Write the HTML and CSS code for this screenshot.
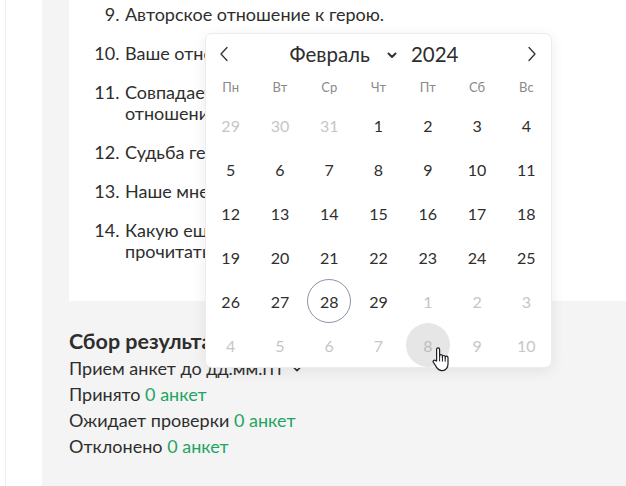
FILE: index.html
```html
<!DOCTYPE html>
<html lang="ru">
<head>
  <meta charset="UTF-8">
  <meta name="viewport" content="width=device-width, initial-scale=1.0">
  <title>Анкета — сбор результатов</title>
  <link rel="stylesheet" href="styles.css">
</head>
<body>
  <div class="layout">
    <aside class="rail"></aside>

    <main class="main">
      <section class="card">
        <ol class="questions" start="9">
          <li>Авторское отношение к герою.</li>
          <li>Ваше отношение к герою.</li>
          <li>Совпадает ли ваше отношение к герою с отношением автора?</li>
          <li>Судьба героя.</li>
          <li>Наше мнение о книге.</li>
          <li>Какую еще книгу этого автора вы хотели бы прочитать?</li>
        </ol>
      </section>

      <section class="results">
        <h3>Сбор результатов</h3>
        <div class="deadline">
          Прием анкет до дд.мм.ггг
          <svg class="caret" width="10" height="6" viewBox="0 0 10 6"><path d="M1.5 1.2 5 4.6 8.5 1.2" fill="none" stroke="#333" stroke-width="1.6" stroke-linecap="round" stroke-linejoin="round"/></svg>
        </div>
        <p>Принято <span class="ok">0 анкет</span></p>
        <p>Ожидает проверки <span class="ok">0 анкет</span></p>
        <p>Отклонено <span class="ok">0 анкет</span></p>
      </section>

      <!-- date picker dropdown -->
      <div class="datepicker">
        <div class="dp-head">
          <button class="dp-nav" type="button">
            <svg width="10" height="16" viewBox="0 0 10 16"><path d="M8 1.5 2 8l6 6.5" fill="none" stroke="#333" stroke-width="1.3" stroke-linecap="round" stroke-linejoin="round"/></svg>
          </button>
          <div class="dp-title">
            <span>Февраль</span>
            <svg class="dp-caret" width="10" height="7" viewBox="0 0 10 7"><path d="M1.5 1.5 5 5l3.5-3.5" fill="none" stroke="#333" stroke-width="2" stroke-linecap="round" stroke-linejoin="round"/></svg>
            <span>2024</span>
          </div>
          <button class="dp-nav" type="button">
            <svg width="10" height="16" viewBox="0 0 10 16"><path d="M2 1.5 8 8l-6 6.5" fill="none" stroke="#333" stroke-width="1.3" stroke-linecap="round" stroke-linejoin="round"/></svg>
          </button>
        </div>

        <div class="dp-grid dp-week">
          <span>Пн</span><span>Вт</span><span>Ср</span><span>Чт</span><span>Пт</span><span>Сб</span><span>Вс</span>
        </div>

        <div class="dp-grid dp-days">
          <span class="out"><i>29</i></span><span class="out"><i>30</i></span><span class="out"><i>31</i></span>
          <span><i>1</i></span><span><i>2</i></span><span><i>3</i></span><span><i>4</i></span>
          <span><i>5</i></span><span><i>6</i></span><span><i>7</i></span><span><i>8</i></span>
          <span><i>9</i></span><span><i>10</i></span><span><i>11</i></span>
          <span><i>12</i></span><span><i>13</i></span><span><i>14</i></span><span><i>15</i></span>
          <span><i>16</i></span><span><i>17</i></span><span><i>18</i></span>
          <span><i>19</i></span><span><i>20</i></span><span><i>21</i></span><span><i>22</i></span>
          <span><i>23</i></span><span><i>24</i></span><span><i>25</i></span>
          <span><i>26</i></span><span><i>27</i></span><span class="today"><i>28</i></span><span><i>29</i></span>
          <span class="out"><i>1</i></span><span class="out"><i>2</i></span><span class="out"><i>3</i></span>
          <span class="out"><i>4</i></span><span class="out"><i>5</i></span><span class="out"><i>6</i></span><span class="out"><i>7</i></span>
          <span class="out hover"><i>8</i></span><span class="out"><i>9</i></span><span class="out"><i>10</i></span>
        </div>
      </div>

      <!-- pointer over the hovered day -->
      <svg class="pointer" width="18" height="25" viewBox="0 0 18 25">
        <path d="M4.6 14V2.3a1.5 1.5 0 0 1 3 0V10V9a1.4 1.4 0 0 1 2.8 0v1.6V9.9a1.4 1.4 0 0 1 2.8 0v1.2v-.6a1.4 1.4 0 0 1 2.8 0V17c0 3.6-2.2 6.6-5.6 6.6H9.6c-2.4 0-3.8-1.4-5-3.2L1.4 15.3a1.3 1.3 0 0 1 2.1-1.6Z" fill="#fff" stroke="#1d1d22" stroke-width="1.2" stroke-linejoin="round"/>
        <path d="M7.6 10.5v3.5M10.4 10.8v3.4M13.2 11.3v3" stroke="#1d1d22" stroke-width="1" stroke-linecap="round"/>
      </svg>
    </main>
  </div>
</body>
</html>
```

FILE: styles.css
```css
body {
  font-family: Lato, "Noto Sans", sans-serif;
  margin: 0;
  padding: 0;
  color: #2e2e2e;
  background-color: #f4f4f4;
  font-size: 18px;
}

.layout {
  display: flex;
  height: 486px;
  overflow: hidden;
}

.rail {
  width: 42px;
  flex: none;
  background-color: white;
}

/* thin divider near the window edge */
.rail::before {
  content: "";
  display: block;
  width: 1px;
  height: 100%;
  margin-left: 5px;
  background-color: #eeeeee;
}

.main {
  flex: 1;
  position: relative;
  background-color: #f4f4f4;
  padding-left: 27px;
}

.card {
  background-color: white;
  padding: 4px 80px 21px 0;
}

.questions {
  margin: 0;
  padding-left: 55px;
  line-height: 21px;
}

.questions li {
  margin-bottom: 18px;
  padding-left: 1px;
}

.results {
  padding-top: 28px;
}

.results h3 {
  margin: 0;
  font-size: 21.5px;
  font-weight: 700;
  line-height: 24px;
}

.deadline,
.results p {
  margin: 0;
  line-height: 26px;
}

.deadline {
  margin-top: 2px;
}

.caret {
  margin-left: 3px;
  vertical-align: 3px;
}

.ok {
  color: #1fa463;
}

/* date picker */
.datepicker {
  position: absolute;
  left: 163px;
  top: 33px;
  width: 345px;
  background-color: white;
  border: 1px solid #ececec;
  border-radius: 7px;
  box-shadow: 0 3px 14px rgba(0, 0, 0, 0.08);
  font-size: 16px;
}

.dp-head {
  height: 40px;
  display: flex;
  align-items: center;
  justify-content: space-between;
  padding: 0 14px 0 13px;
}

.dp-nav {
  border: 0;
  background: none;
  padding: 0;
  width: 10px;
  height: 16px;
  display: flex;
}

.dp-title {
  display: flex;
  align-items: center;
  font-size: 20.5px;
  color: #2e2e2e;
  margin-left: -8px;
}

.dp-caret {
  margin: 2px 14px 0 17px;
}

.dp-grid {
  display: grid;
  grid-template-columns: repeat(7, 1fr);
}

.dp-week {
  height: 26px;
  align-items: center;
  margin-bottom: 3px;
}

.dp-week span {
  text-align: center;
  font-size: 13px;
  color: #8a8a8a;
}

.dp-days span {
  height: 44px;
  display: flex;
  justify-content: center;
  align-items: center;
}

.dp-days i {
  font-style: normal;
  width: 44px;
  height: 44px;
  border-radius: 50%;
  display: flex;
  align-items: center;
  justify-content: center;
  box-sizing: border-box;
  color: #2e2e2e;
}

.dp-days .out i {
  color: #c6c6c6;
}

.dp-days .today i {
  border: 1px solid #8b94a3;
}

.dp-days .hover i {
  background-color: #e6e6e6;
  color: #bdbdbd;
}

.pointer {
  position: absolute;
  left: 390px;
  top: 347px;
}
```
